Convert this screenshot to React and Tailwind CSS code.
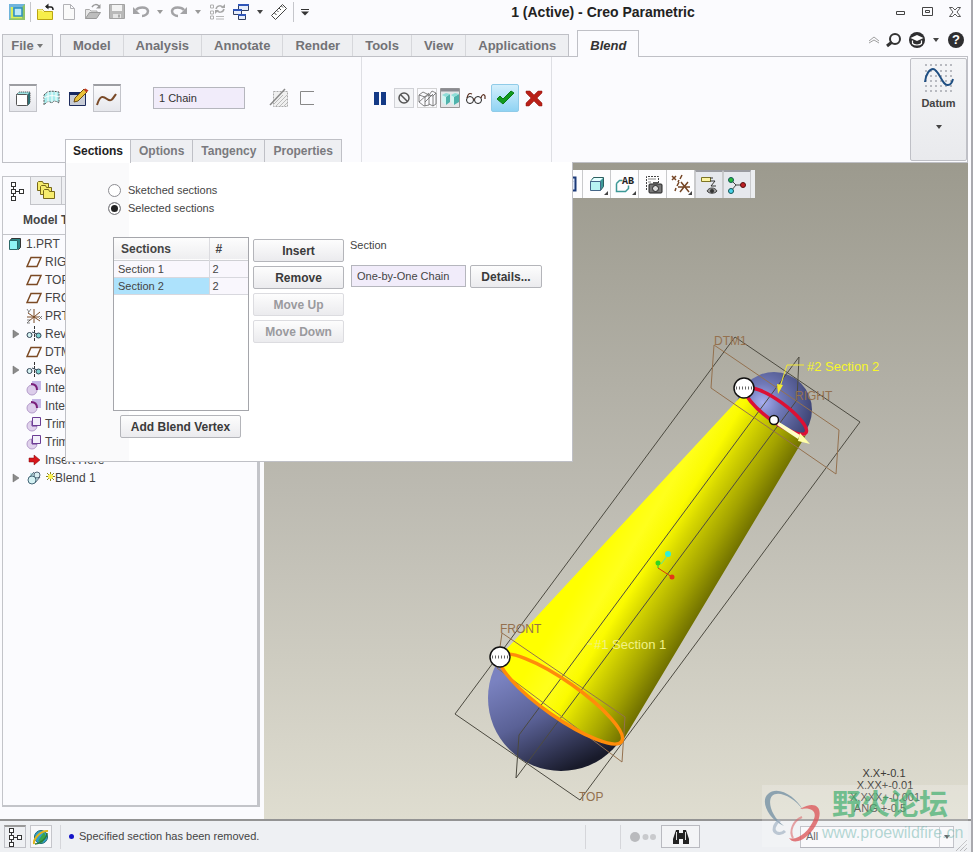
import React from "react";

const Svg = ({ w = 18, h = 18, children, className = "" }) => (
  <svg width={w} height={h} viewBox={`0 0 ${w} ${h}`} fill="none" className={`block shrink-0 ${className}`} aria-hidden="true">
    {children}
  </svg>
);

const Caret = ({ color = "#444" }) => (
  <Svg w={8} h={6}><path d="M1 1h6L4 5z" fill={color} /></Svg>
);

/* ---------- quick access toolbar ---------- */

const LogoIcon = () => (
  <Svg>
    <rect x="1" y="1" width="16" height="16" fill="#8fc46a" />
    <path d="M1 1h16L1 17z" fill="#6fb4dc" />
    <path d="M4 4v10h10" stroke="#d8ee5a" strokeWidth="2.5" />
    <rect x="6" y="5" width="8" height="8" fill="#bfe9f8" stroke="#2d8fc0" strokeWidth="1.5" />
  </Svg>
);
const FolderUpIcon = () => (
  <Svg>
    <path d="M1.500 6.500h5l1.500 2h8.500v8H1.500z" fill="#f7ee4a" stroke="#b9a413" />
    <path d="M2 7h4l1.500 2" stroke="#fffbc0" />
    <path d="M10 4h5c1.500 0 2 1 2 3" stroke="#222" strokeWidth="1.500" />
    <path d="M12.500 0.500v6L9 3.500z" fill="#222" />
  </Svg>
);
const NewIcon = () => (
  <Svg><path d="M3.500 1.500h7l4 4v11h-11zM10.500 1.500v4h4" fill="#fafafa" stroke="#b2b2b6" /></Svg>
);
const OpenIcon = () => (
  <Svg>
    <path d="M1.500 15.500v-9h4l1.500 1.500h6v2" stroke="#aaa" fill="#e8e8e8" />
    <path d="M1.500 15.500l4-6h11l-4 6z" fill="#bdbdbd" stroke="#999" />
    <path d="M8 4c2-3 5-3 7-1" stroke="#999" strokeWidth="1.500" />
    <path d="M16.500 1v4.500H12z" fill="#999" />
  </Svg>
);
const SaveIcon = () => (
  <Svg>
    <path d="M1.500 1.500h15v14h-15z" fill="#b9b9b9" stroke="#a2a2a2" />
    <path d="M4 2h10v6H4z" fill="#f3f3f3" />
    <path d="M5 11h8v4H5z" fill="#e4e4e4" /><path d="M10 11.500h2v3h-2z" fill="#aaa" />
  </Svg>
);
const UndoIcon = ({ flip }) => (
  <Svg className={flip ? "-scale-x-100" : ""}>
    <path d="M4 7c2-3 11-4 12 1 0 3-3 5-6 5" stroke="#a3a3a6" strokeWidth="2.500" />
    <path d="M1 4v7h7z" fill="#a3a3a6" />
  </Svg>
);
const RegenIcon = () => (
  <Svg>
    {[2, 8, 13].map((y) => <path key={y} d={`M2.500 ${y}h3v3h-3z`} stroke="#b0b0b0" />)}
    <path d="M8 13.500h8M8 16h8" stroke="#b8b8b8" />
    <path d="M8 6c1-4 6-4 7-1M16 6c-1 4-6 4-7 1" stroke="#a6a6a6" strokeWidth="1.500" />
    <path d="M13 5h4V1zM11 7H7v4z" fill="#a6a6a6" />
  </Svg>
);
const WindowsIcon = () => (
  <Svg>
    {[[6, 1, 10, 6], [1, 6, 8, 5], [6, 11, 7, 5]].map(([x, y, w, h]) => (
      <g key={y}>
        <path d={`M${x + 0.5} ${y + 0.5}h${w}v${h}h-${w}z`} fill="#e6edfb" stroke="#333f60" />
        <path d={`M${x} ${y + 1}h${w + 1}`} stroke="#2f55b8" strokeWidth="2" />
      </g>
    ))}
  </Svg>
);
const RulerIcon = () => (
  <Svg>
    <path d="M1.500 12.500L12.500 1.500l4 4L5.500 16.500z" fill="#fff" stroke="#444" />
    <path d="M4.500 10l2 2M7 7.500l1.500 1.500M9 5l2 2M11.500 3l1.500 1.500" stroke="#444" />
  </Svg>
);

/* ---------- ribbon ---------- */

const SolidIcon = () => (
  <Svg>
    <path d="M2 5l3-3h11v11l-3 3z" fill="#9fe3e3" stroke="#333" strokeDasharray="1 1" />
    <path d="M13 5l3-3v11l-3 3z" fill="#2f6f72" />
    <rect x="2.500" y="4.500" width="11" height="11" rx="1" fill="#fff" stroke="#555" />
  </Svg>
);
const SurfaceIcon = () => (
  <Svg>
    <path d="M2 6c4-5 8-4 15-3v11c-4-3-6-2-7 0-3-2-5-2-8 2z" fill="#a8ecec" stroke="#555" strokeDasharray="2 1" />
    <path d="M6 3v11M10 3v10M14 3v9M2 9c5-3 10-3 15-1" stroke="#fff" />
  </Svg>
);
const SketchIcon = () => (
  <Svg w={22} h={20}>
    <path d="M1.500 4.500h16v13h-16z" fill="#c8ccd6" stroke="#1d2b5c" />
    <path d="M1 5.500h17" stroke="#17285f" strokeWidth="3" />
    <path d="M6 14l1-4 9-9 3 3-9 9z" fill="#e9c13b" stroke="#6a4b10" />
    <path d="M15.500 1.500l3 3 2-2-3-2z" fill="#c23b22" />
  </Svg>
);
const SplineIcon = () => (
  <Svg w={22} h={18}><path d="M1 15C4 5 7 6 11 9s5 1 9-5" stroke="#7a4a28" strokeWidth="2" /></Svg>
);
const HatchIcon = () => (
  <Svg w={20} h={20}>
    <path d="M4.500 3.500h14v15h-14z" stroke="#aaa" strokeDasharray="2 1" fill="#f0f0f0" />
    <path d="M7 18L18 7M11 18l7-7M15 18l3-3M5 16l9-9" stroke="#bbb" />
    <path d="M1 17L16 1" stroke="#888" strokeWidth="1.500" />
  </Svg>
);
const OpenBoxIcon = () => (
  <Svg><path d="M16 2.500H2.500v13H16" stroke="#888" /></Svg>
);
const PauseIcon = () => (
  <Svg><path d="M3 3h5v13H3zM10 3h5v13h-5z" fill="#143a86" /></Svg>
);
const NoIcon = () => (
  <Svg><circle cx="9" cy="9" r="5" stroke="#555" strokeWidth="1.500" /><path d="M5.500 5.500l7 7" stroke="#555" strokeWidth="1.500" /></Svg>
);
const WireIcon = () => (
  <Svg w={20} h={20}>
    <path d="M.5 .5h19v19H.5z" stroke="#aaa" strokeDasharray="1 1" />
    <path d="M2 7l4-3 6 3v10l-5 1-5-4zM2 7l6 2 4-2M8 9v9M12 7l3-4 4 2-3 3v10l-4-2M16 8l-4-1M19 5v11l-3 2M2 14l10-9M8 14l8-8" stroke="#666" strokeWidth="0.800" />
  </Svg>
);
const ShadedIcon = () => (
  <Svg w={20} h={20}>
    <path d="M.5 .5h19v19H.5z" fill="#e4e6e8" stroke="#999" />
    <path d="M1 2h18" stroke="#8a8a90" strokeWidth="3" />
    <path d="M2 7l4 2v8l-4-3zM11 7l3 2v8l-3-3z" fill="#d2f6f2" />
    <path d="M6 9l4-3v8l-4 3zM14 9l5-3v8l-5 3z" fill="#4fb3ac" />
    <path d="M2 7l4-2 4 1-4 3zM11 7l4-2 4 1-5 3z" fill="#8fded8" />
  </Svg>
);
const GlassesIcon = () => (
  <Svg w={22} h={18}>
    <circle cx="5" cy="11" r="3.500" stroke="#222" /><circle cx="13" cy="11" r="3.500" stroke="#222" />
    <path d="M8 10h2M2 9C3 4 5 4 7 5M16 9c1-4 3-4 4-2v3" stroke="#5a3020" strokeWidth="1.200" />
  </Svg>
);
const CheckIcon = () => (
  <Svg w={20} h={20}><path d="M2 11l3-3 3 3 8-8 3 2L8 16z" fill="#119a1d" stroke="#0b7a14" /></Svg>
);
const CrossIcon = () => (
  <Svg w={20} h={20}><path d="M2 3h4l4 4 4-4h4v2l-5 5 5 5v3h-3l-5-5-5 5H2v-3l5-5-5-5z" fill="#b92018" stroke="#8c140e" strokeWidth="0.500" /></Svg>
);

const DatumIcon = () => (
  <Svg w={32} h={30}>
    {[1, 7, 12, 17, 22, 27].map((y) =>
      [2, 7, 12, 17, 22, 27].map((x) => <rect key={`${x}-${y}`} x={x} y={y} width="2" height="2" fill="#b8bac0" />)
    )}
    <path d="M2 19C3 10 7 6 10 6c6 0 9 17 15 16 3 0 4-2 5-6" stroke="#1f4f82" strokeWidth="2" />
  </Svg>
);

/* ---------- model tree ---------- */

const TreeNodesIcon = () => (
  <Svg w={16} h={20}>
    <path d="M4.500 4v12M5 10.500h7" stroke="#333" />
    {[[2, 1], [2, 8], [2, 15], [10, 8]].map(([x, y]) => (
      <rect key={`${x}${y}`} x={x + 0.5} y={y + 0.5} width="4" height="4" fill="#fff" stroke="#333" />
    ))}
  </Svg>
);
const FoldersIcon = () => (
  <Svg w={20} h={20}>
    {[[1, 1], [4, 5], [7, 9]].map(([x, y]) => (
      <path key={x} d={`M${x + 0.5} ${y + 0.5}l1-1h4l1 2h5v7h-11z`} fill="#f6ec6d" stroke="#77681a" />
    ))}
  </Svg>
);
const PartIcon = () => (
  <Svg w={14} h={14}>
    <path d="M1.500 4.500l2-3h9v9l-2 2z" fill="#2d8585" stroke="#333" />
    <path d="M1.500 3.500h8v9h-8z" fill="#8ff4f4" stroke="#2c6868" />
  </Svg>
);
const PlaneIcon = () => (
  <Svg w={16} h={14}><path d="M5 2.500h10l-4 9H1z" stroke="#7b4a24" strokeWidth="1.500" /></Svg>
);
const CsysIcon = () => (
  <Svg w={16} h={16}>
    <path d="M8 1v14M2 5l12 8M14 4L3 13M1 9h12" stroke="#7b4a24" />
    <path d="M1 1l2 3M5 1L2 5M13 8l3 3M16 8l-3 3M1 12h3l-3 3h3" stroke="#555" strokeWidth="0.700" />
  </Svg>
);
const RevolveIcon = () => (
  <Svg w={16} h={16}>
    <path d="M8.500 0v16" stroke="#333" strokeDasharray="3 1" />
    <circle cx="3.500" cy="9" r="2.500" fill="#d6f3f3" stroke="#345" />
    <path d="M6 6l5 2" stroke="#345" />
    <circle cx="12.500" cy="9.500" r="2.500" fill="#7fd0d0" stroke="#345" />
  </Svg>
);
const IntersectIcon = () => (
  <Svg w={16} h={16}>
    <rect x="6" y="1" width="9" height="9" fill="#c4b6e6" />
    <circle cx="6" cy="10" r="5" fill="#dccdea" stroke="#b49ccb" />
    <path d="M5 4c4 0 6 2 6 6" stroke="#7a1f7a" strokeWidth="2" />
  </Svg>
);
const TrimIcon = () => (
  <Svg w={16} h={16}>
    <circle cx="6" cy="10" r="5" fill="#e0d2ec" stroke="#b49ccb" />
    <path d="M6.500 5.500v-4h8v8h-8z" fill="#f3effa" stroke="#6c3d94" />
    <path d="M6 5v5h5" stroke="#6c3d94" />
  </Svg>
);
const InsertIcon = () => (
  <Svg w={16} h={14}><path d="M3 5h5V2l6 5-6 5V9H3z" fill="#d8161c" stroke="#7d0a0e" strokeWidth="0.500" /></Svg>
);
const BlendIcon = () => (
  <Svg w={16} h={16}>
    <path d="M4 3h9v5l-5 5-4-4z" fill="#bfe6ea" />
    <circle cx="11" cy="5" r="3" fill="#d8eef2" stroke="#567" />
    <path d="M8 2l-5 6M14 7l-5 6" stroke="#567" />
    <circle cx="6" cy="10" r="4" fill="#d4f1f3" stroke="#467" />
  </Svg>
);

const TREE = [
  ["RIGHT", PlaneIcon],
  ["TOP", PlaneIcon],
  ["FRONT", PlaneIcon],
  ["PRT_CSYS_DEF", CsysIcon],
  ["Revolve 1", RevolveIcon, true],
  ["DTM1", PlaneIcon],
  ["Revolve 2", RevolveIcon, true],
  ["Intersect 1", IntersectIcon],
  ["Intersect 2", IntersectIcon],
  ["Trim 1", TrimIcon],
  ["Trim 2", TrimIcon],
  ["Insert Here", InsertIcon],
  ["Blend 1", BlendIcon, true, true],
];

function ModelTree() {
  return (
    <aside className="flex w-[264px] shrink-0 flex-col pt-[13px] pr-1 pb-3 pl-0.5">
      <div className="flex flex-1 flex-col border-t border-r-3 border-b-2 border-l border-[#c3c4c9]">
        <div className="flex h-7">
          <button aria-label="Model tree" className="flex w-7 items-center justify-center border-r border-[#c3c4c9]"><TreeNodesIcon /></button>
          <button aria-label="Folder browser" className="flex w-[31px] items-center justify-center border-r border-b border-[#c3c4c9] bg-[#eeeff2]"><FoldersIcon /></button>
          <div className="flex-1 border-b border-[#c3c4c9] bg-[#eeeff2]" />
        </div>
        <h2 className="h-[30px] border-b border-[#c3c4c9] pl-5 text-xs leading-[30px] font-bold text-[#444]">Model Tree</h2>
        <ul className="text-xs text-[#444]">
          <li className="flex h-[18px] items-center gap-1 pl-[5px]"><PartIcon />1.PRT</li>
          {TREE.map(([name, Icon, expands, isNew]) => (
            <li key={name} className="flex h-[18px] items-center pl-[9px]">
              <span className="w-[14px]">
                {expands && <Svg w={8} h={10}><path d="M1 1v8l6-4z" fill="#8b8b8b" stroke="#666" strokeWidth="0.500" /></Svg>}
              </span>
              <Icon />
              <span className={isNew ? "flex items-center pl-1" : "pl-[3px]"}>
                {isNew && (
                  <Svg w={9} h={12}><path d="M4.500 0v9M0 4.500h9M1 1l7 7M8 1L1 8" stroke="#8a8420" strokeWidth="1" /><circle cx="4.500" cy="4.500" r="2.500" fill="#fbf04a" /></Svg>
                )}
                {name}
              </span>
            </li>
          ))}
        </ul>
      </div>
    </aside>
  );
}

/* ---------- graphics area ---------- */

function Scene() {
  return (
    <svg viewBox="264 163 704 656" className="absolute inset-0 h-full w-full font-['Liberation_Sans',Arial,sans-serif]" fill="none" fontSize="12">
      <defs>
        <linearGradient id="cone" gradientUnits="userSpaceOnUse" x1="612" y1="530" x2="724" y2="598">
          <stop offset="0" stopColor="#ffff00" />
          <stop offset="0.200" stopColor="#ffff1c" />
          <stop offset="0.360" stopColor="#fbfb00" />
          <stop offset="0.500" stopColor="#d6d600" />
          <stop offset="0.720" stopColor="#a2a200" />
          <stop offset="1" stopColor="#545400" />
        </linearGradient>
        <linearGradient id="ball" gradientUnits="userSpaceOnUse" x1="518" y1="670" x2="566" y2="772">
          <stop offset="0" stopColor="#7a82c0" />
          <stop offset="0.450" stopColor="#5a6196" />
          <stop offset="1" stopColor="#181a2a" />
        </linearGradient>
        <radialGradient id="cap" cx="0.350" cy="0.400" r="0.700">
          <stop offset="0" stopColor="#a7aef0" />
          <stop offset="0.350" stopColor="#7079b8" />
          <stop offset="1" stopColor="#3b4170" />
        </radialGradient>
      </defs>

      <circle cx="561" cy="698" r="73" fill="url(#ball)" />
      <circle cx="774" cy="410" r="38" fill="url(#cap)" />
      <path d="M500 656L746 391A37 10 36 0 0 806 435L622 742A74 18 35 0 1 500 656z" fill="url(#cone)" />

      <g stroke="#4c4a40" strokeWidth="1">
        <path d="M455 714L735 337 860 422 580 800z" />
        <path d="M519 735L799 357 797 400 516 778z" />
      </g>
      <g stroke="#94714f" strokeWidth="1">
        <path d="M502 633L625 717 622 762 497 668z" />
        <path d="M714 345L839 430 836 474 711 388z" />
      </g>

      <ellipse cx="561" cy="699" rx="74" ry="18" transform="rotate(35 561 699)" stroke="#ff8c0a" strokeWidth="3.500" />
      <ellipse cx="776" cy="411" rx="37" ry="10" transform="rotate(36 776 411)" stroke="#dc1034" strokeWidth="3.500" />

      <path d="M779 422l21 13-2 4-21-14z" fill="#ffffc8" />
      <path d="M800 433l10 11-12-3z" fill="#ffffa8" />
      <path d="M804 365h-17l-7 22" stroke="#f3ea30" />
      <path d="M777 384l6 1-5 9z" fill="#f3ea30" />

      {[[500, 657], [744, 388]].map(([x, y]) => (
        <g key={x}>
          <circle cx={x} cy={y} r="10" fill="#fff" stroke="#111" strokeWidth="1.500" />
          <path d={`M${x - 8} ${y}h17`} stroke="#666" strokeWidth="3" strokeDasharray="1 2" />
        </g>
      ))}
      <circle cx="774" cy="420" r="4.500" fill="#fff" stroke="#111" strokeWidth="1.500" />

      <path d="M658 568l14 9" stroke="#d83a10" />
      <path d="M658 568v-5" stroke="#22c832" />
      <path d="M661 564l7-9" stroke="#58e6a0" />
      <circle cx="668" cy="554" r="3" fill="#2ff0dc" />
      <circle cx="658" cy="563" r="2.500" fill="#33d422" />
      <circle cx="672" cy="577" r="2.500" fill="#e23818" />

      <g fill="#94714f">
        <text x="714" y="345">DTM1</text>
        <text x="795" y="400">RIGHT</text>
        <text x="500" y="633">FRONT</text>
        <text x="579" y="801">TOP</text>
      </g>
      <g fontSize="13">
        <text x="807" y="371" fill="#f6f62a">#2 Section 2</text>
        <text x="594" y="649" fill="#f1f186">#1 Section 1</text>
      </g>
      <path d="M587 644h5" stroke="#f1f186" />
      <g fill="#3c3b37" fontSize="11" textAnchor="middle">
        <text x="884" y="777">X.X+-0.1</text>
        <text x="885" y="789">X.XX+-0.01</text>
        <text x="885" y="801">X.XXX+-0.001</text>
        <text x="880" y="812">ANG.+-0.5</text>
      </g>
    </svg>
  );
}

const DropCorner = () => <path d="M22 18v4h-4z" fill="#444" />;

const VIEW_TOOLS = [
  ["Refit", <Svg w={22} h={22}><circle cx="9" cy="9" r="5" stroke="#345" /><path d="M13 13l5 5" stroke="#345" strokeWidth="2" /></Svg>],
  ["Repaint", <Svg w={22} h={22}><path d="M5.500 4.500h12v13h-12z" fill="#dfe9fa" stroke="#1c3a78" strokeWidth="2" /><path d="M8 11l3 3 4-6" stroke="#1c3a78" /></Svg>],
  ["Display style", <Svg w={22} h={22}><path d="M4.500 8.500l3-4h10v9l-3 4z" fill="#3e9a9a" stroke="#2d5f60" /><path d="M4.500 8.500h10v9h-10z" fill="#b7f4f2" stroke="#468" /><path d="M5 8l3-3h9l-3 3z" fill="#e5ffff" /><DropCorner /></Svg>],
  ["Saved orientations", <Svg w={22} h={22}><path d="M2.500 10.500l3-3h3M2.500 10.500v8h9l3-3v-3" fill="none" stroke="#3c9896" strokeWidth="1.500" /><text x="8" y="11" fontSize="10" fontWeight="bold" fill="#222" fontFamily="Liberation Mono">AB</text><DropCorner /></Svg>],
  ["View manager", <Svg w={22} h={22}><path d="M4.500 17v-13.500h12V10" stroke="#444" strokeDasharray="2 1" fill="#fff" /><path d="M6 6h8M6 9h3" stroke="#888" /><rect x="7" y="11" width="13" height="9" rx="1" fill="#777" stroke="#222" /><rect x="11" y="9" width="5" height="3" fill="#555" /><circle cx="13.500" cy="15.500" r="3" fill="#ddd" stroke="#222" /></Svg>],
  ["Datum display", <Svg w={22} h={22}><path d="M2 3l4 4M6 3L2 7M12 2l-2 4M9 7l-1 2M5 18l1-3M7 13l2-4M11 9l8 10M18 9l-8 10M8 14h12" stroke="#744423" strokeWidth="1.500" /><DropCorner /></Svg>],
  ["Annotation display", <Svg w={22} h={22}><path d="M3.500 3.500h9v4h-9z" fill="#fbf3a0" stroke="#7d7424" /><path d="M12 4h3M12 7h5l-4 5h5" stroke="#333" /><path d="M9 17c2-4 8-4 10 0-2 3-8 3-10 0z" fill="#999" stroke="#444" /><circle cx="14" cy="17" r="2" fill="#333" /></Svg>, true],
  ["Spin center", <Svg w={22} h={22}><path d="M5 6l5 5-5 6M10 11h7" stroke="#444" /><circle cx="5" cy="6" r="2.500" fill="#2abb3a" stroke="#155" /><circle cx="5" cy="17" r="2.500" fill="#4ad2ea" stroke="#155" /><circle cx="17" cy="11" r="2.500" fill="#c01f24" stroke="#511" /></Svg>, true],
];

function Viewport() {
  return (
    <main className="relative flex-1 overflow-hidden bg-linear-to-b from-[#9c9a8e] via-[#bcbab1] to-[#dfddd0]">
      <Scene />
      <div className="absolute top-[7px] left-[263px] flex h-7 bg-[#eceef0] pr-1">
        {VIEW_TOOLS.map(([label, icon, on]) => (
          <button
            key={label}
            aria-label={label}
            className={`flex w-7 items-center justify-center border-r border-[#c9cacc] ${on ? "border-t-2 border-l border-t-[#9a9ba0] bg-[#e6e8ed]" : "bg-[#fdfdfe]"}`}
          >
            {icon}
          </button>
        ))}
      </div>
    </main>
  );
}

/* ---------- blend dashboard panel ---------- */

const buttonBase = "h-[23px] rounded-xs border px-2 text-xs font-bold bg-linear-to-b from-[#fdfdfd] to-[#ebebee]";

function PushButton({ children, disabled, className = "" }) {
  return (
    <button disabled={disabled} className={`${buttonBase} ${disabled ? "border-[#dcdce0] text-[#9a9a9e]" : "border-[#b4b5ba] text-[#3a3a3a]"} ${className}`}>
      {children}
    </button>
  );
}

function SectionsPanel() {
  const radio = "h-[13px] w-[13px] appearance-none rounded-full border border-[#8d8d92] bg-white checked:bg-[#222] checked:shadow-[inset_0_0_0_2px_white]";
  return (
    <section className="absolute top-full left-[62px] z-10 flex h-[300px] w-[508px] flex-col border border-t-0 border-[#bfc0c6] bg-[linear-gradient(90deg,#fafafb_63px,#fff_63px)] pt-[19px] pl-[47px] text-[11px] text-[#444]">
      <div className="-ml-[5px] flex flex-col">
        <label className="flex h-[18px] items-center gap-[7px]"><input type="radio" name="mode" className={radio} />Sketched sections</label>
        <label className="flex h-[18px] items-center gap-[7px]"><input type="radio" name="mode" defaultChecked className={radio} />Selected sections</label>
      </div>
      <div className="mt-5 flex items-start">
        <div className="h-[174px] w-[136px] border border-[#a5a6ab] bg-white">
          <table className="w-full border-collapse text-left">
            <thead>
              <tr className="h-[22px] border-b border-[#cfd0d4] bg-linear-to-b from-[#fdfdfd] to-[#eeeef0] text-xs">
                <th className="w-[95px] border-r border-[#dcdce0] py-0 pl-[7px]">Sections</th>
                <th className="py-0 pl-[6px]">#</th>
              </tr>
            </thead>
            <tbody>
              <tr className="h-[17px] border-b border-[#d8d8de] bg-[#f9f7fd] leading-4">
                <td className="border-r border-[#d8d8de] p-0 pl-1">Section 1</td><td className="p-0 pl-[3px]">2</td>
              </tr>
              <tr className="h-[17px] border-b border-[#d8d8de] bg-[#f9f7fd] leading-4">
                <td className="border-r border-[#d8d8de] bg-[#ade2fc] p-0 pl-1">Section 2</td><td className="p-0 pl-[3px]">2</td>
              </tr>
            </tbody>
          </table>
        </div>
        <div className="mt-0.5 ml-1 flex w-[91px] flex-col gap-1">
          <PushButton>Insert</PushButton>
          <PushButton>Remove</PushButton>
          <PushButton disabled className="whitespace-nowrap">Move Up</PushButton>
          <PushButton disabled className="whitespace-nowrap">Move Down</PushButton>
        </div>
        <div className="ml-1.5 flex flex-col gap-3">
          <label htmlFor="chain" className="h-4 leading-4">Section</label>
          <div className="flex gap-1 pl-px">
            <input id="chain" readOnly value="One-by-One Chain" className="h-[22px] w-[115px] border border-[#b5b6bd] bg-[#f1ecfa] px-[5px] text-[11px]" />
            <PushButton className="w-[72px]">Details...</PushButton>
          </div>
        </div>
      </div>
      <PushButton className="mt-1 ml-[7px] w-[121px] whitespace-nowrap">Add Blend Vertex</PushButton>
    </section>
  );
}

const Pressed = ({ label, children }) => (
  <button aria-label={label} className="flex h-7 w-7 items-center justify-center border border-t-2 border-[#c3c4ca] border-t-[#9c9da2] bg-linear-to-b from-[#fbfbfd] to-[#e6e7ec]">{children}</button>
);
const Flat = ({ label, children, className = "w-7" }) => (
  <button aria-label={label} className={`flex h-7 items-center justify-center ${className}`}>{children}</button>
);

function Ribbon() {
  return (
    <div className="relative mr-[3px] ml-0.5 flex h-[106px] border border-t-0 border-[#bfc0c6]">
      <div className="w-[359px] border-r border-[#dedfe4] pt-[27px]">
        <div className="flex items-center pl-1.5">
          <Pressed label="Solid"><SolidIcon /></Pressed>
          <Flat label="Surface"><SurfaceIcon /></Flat>
          <Flat label="Sketch"><SketchIcon /></Flat>
          <Pressed label="Curve"><SplineIcon /></Pressed>
          <input aria-label="Section chain" readOnly value="1 Chain" className="ml-8 h-[22px] w-[92px] border border-[#b5b6bd] bg-[#f1ecfa] px-[5px] text-[11px] text-[#333]" />
          <Flat label="Remove material" className="ml-5 w-7"><HatchIcon /></Flat>
          <Flat label="Thicken"><OpenBoxIcon /></Flat>
        </div>
      </div>
      <div className="flex w-[190px] items-start border-r border-[#dedfe4] pt-[27px] pl-[5px]">
        <Flat label="Pause" className="w-[25px]"><PauseIcon /></Flat>
        <Flat label="No preview" className="w-[23px]"><span className="border border-[#d0d1d6] bg-[#f3f4f6]"><NoIcon /></span></Flat>
        <Flat label="Unattached preview" className="w-[23px]"><WireIcon /></Flat>
        <Flat label="Attached preview" className="w-[23px]"><ShadedIcon /></Flat>
        <Flat label="Verify" className="w-[30px]"><GlassesIcon /></Flat>
        <button aria-label="Accept" className="flex h-7 w-7 items-center justify-center rounded-xs border border-[#90cbe8] bg-linear-to-b from-[#d3effc] to-[#8fd3f3]"><CheckIcon /></button>
        <Flat label="Cancel" className="w-[30px]"><CrossIcon /></Flat>
      </div>
      <div className="flex-1" />
      <button className="my-px flex w-[57px] flex-col items-center rounded-xs border border-[#bfc0c6] bg-linear-to-b from-[#f4f5f7] to-[#e9eaed] pt-1 text-[11px] font-bold text-[#444]">
        <DatumIcon />
        <span className="mt-0.5 mb-3">Datum</span>
        <Caret />
      </button>
      <nav className="absolute bottom-0 left-[62px] z-20 flex h-[23px] text-xs font-bold text-[#7a7a7e]">
        <a href="#sections" className="-mb-px border-x border-t border-[#bfc0c6] bg-white px-[7px] pt-[3px] text-[#222]">Sections</a>
        {["Options", "Tangency", "Properties"].map((t) => (
          <a key={t} href={`#${t}`} className="border-t border-r border-[#bfc0c6] bg-[#eeeff2] px-2 pt-[3px]">{t}</a>
        ))}
      </nav>
      <SectionsPanel />
    </div>
  );
}

/* ---------- frame ---------- */

const Tool = ({ label, children, className = "w-5" }) => (
  <button aria-label={label} className={`flex items-center justify-center ${className}`}>{children}</button>
);
const Rule = () => <span className="h-5 w-px bg-[#c5c6cb]" />;

function TitleBar() {
  return (
    <header className="flex h-[23px] items-center pr-2">
      <div className="flex items-center gap-1 pl-2">
        <Tool label="Application menu" className="w-[18px]"><LogoIcon /></Tool>
        <Rule />
        <Tool label="Working directory"><FolderUpIcon /></Tool>
        <Tool label="New"><NewIcon /></Tool>
        <Tool label="Open"><OpenIcon /></Tool>
        <Tool label="Save"><SaveIcon /></Tool>
        <Tool label="Undo"><UndoIcon /></Tool>
        <Tool label="Undo list" className="w-2.5"><Caret color="#999" /></Tool>
        <Tool label="Redo"><UndoIcon flip /></Tool>
        <Tool label="Redo list" className="w-2.5"><Caret color="#999" /></Tool>
        <Tool label="Regenerate"><RegenIcon /></Tool>
        <Tool label="Windows"><WindowsIcon /></Tool>
        <Tool label="Window list" className="w-2.5"><Caret /></Tool>
        <Tool label="Measure"><RulerIcon /></Tool>
        <Rule />
        <Tool label="Customize toolbar" className="w-3.5"><Svg w={10} h={8}><path d="M1 1.500h8" stroke="#333" /><path d="M1 3.500h8L5 7.500z" fill="#333" /></Svg></Tool>
      </div>
      <h1 className="flex-1 pl-0.5 text-center text-sm leading-5 font-bold text-[#222]">1 (Active) - Creo Parametric</h1>
      <div className="flex items-center gap-2.5 text-[#444]">
        <Tool label="Minimize" className="w-[17px]"><Svg w={10} h={12}><path d="M.5 5.500h8v3h-8z" stroke="#444" /></Svg></Tool>
        <Tool label="Maximize" className="w-[17px]"><Svg w={12} h={10}><path d="M.5 .5h10v8h-10zM3.500 3.500h4v2h-4z" stroke="#444" /></Svg></Tool>
        <Tool label="Close" className="w-[17px]"><Svg w={12} h={10}><path d="M.5 .5h3L6 3l2.500-2.500h3L8 5l3.500 4.500h-3L6 7 3.500 9.500h-3L4 5z" stroke="#444" strokeWidth="0.900" /></Svg></Tool>
      </div>
    </header>
  );
}

const TABS = ["Model", "Analysis", "Annotate", "Render", "Tools", "View", "Applications"];

function TabRow() {
  return (
    <div className="mr-[3px] ml-0.5 flex h-[34px] items-end border-b border-[#bfc0c6] text-[13px] font-bold text-[#727276]">
      <button className="flex h-[22px] w-[51px] items-center justify-center gap-0.5 border border-b-0 border-[#bfc0c6] bg-[#eeeff2]">File<Caret color="#777" /></button>
      <nav className="ml-[7px] flex h-[22px] border-t border-l border-[#bfc0c6] bg-[#eeeff2]">
        {TABS.map((t) => (
          <a key={t} href={`#${t}`} className="border-r border-[#d6d7db] px-3 leading-[22px] last:border-[#bfc0c6]">{t}</a>
        ))}
      </nav>
      <a href="#Blend" className="-mb-px ml-2 h-[27px] border border-b-0 border-[#bfc0c6] bg-[#fbfbfe] px-3 leading-[29px] text-[#333] italic">Blend</a>
      <div className="ml-auto flex h-full items-center gap-1.5 pr-[3px]">
        <Tool label="Collapse ribbon" className="w-3"><Svg w={12} h={8}><path d="M1 5l5-4 5 4M1 7l5-3 5 3" stroke="#888" strokeWidth="0.800" /></Svg></Tool>
        <Tool label="Search" className="w-4"><Svg w={16} h={16}><circle cx="9" cy="7" r="5" stroke="#333" strokeWidth="2" /><path d="M6 10l-5 4" stroke="#333" strokeWidth="3" /></Svg></Tool>
        <Tool label="Learning" className="w-[18px]"><Svg><circle cx="9" cy="9" r="8" fill="#2e2e30" /><path d="M2.500 7L9 4l6.500 3L9 10z" fill="#fff" /><path d="M4.500 9.500v3c2 2 7 2 9 0v-3" stroke="#fff" strokeWidth="1.200" /></Svg></Tool>
        <Tool label="Learning menu" className="w-2"><Caret /></Tool>
        <Tool label="Help" className="ml-px w-[18px]"><span className="h-4 w-4 rounded-full bg-[#2e2e30] text-center text-[13px] leading-4 text-white">?</span></Tool>
      </div>
    </div>
  );
}

function StatusBar() {
  return (
    <footer className="flex h-[33px] items-center border-t-2 border-[#939393] bg-[#eef0f3] pr-[3px] pl-1 text-[11px] text-[#444]">
      <button aria-label="Toggle tree" className="flex h-[23px] w-[22px] items-center justify-center border border-t-2 border-[#bfc0c6] border-t-[#999]"><TreeNodesIcon /></button>
      <button aria-label="Toggle browser" className="ml-1 flex h-[23px] w-[22px] items-center justify-center border border-[#c5c6cb] bg-[#f8f8fa]">
        <Svg><circle cx="9" cy="9" r="6.500" fill="#2f9fd0" stroke="#1d6a70" /><path d="M6 13L12 4l2 5-4 6z" fill="#38a44a" /><path d="M2 16C1 11 9 2 16 3" stroke="#e0b51c" strokeWidth="2" /><path d="M3 16c4 0 12-5 12-11" stroke="#2b7a35" strokeWidth="1.500" /></Svg>
      </button>
      <span className="mx-2 h-6 w-px bg-[#d5d6da]" />
      <span className="h-[5px] w-[5px] rounded-full bg-[#1414c8]" />
      <p className="ml-[5px] flex-1">Specified section has been removed.</p>
      <span className="h-6 w-px bg-[#d5d6da]" />
      <span className="mr-2 ml-[34px] h-6 w-px bg-[#d5d6da]" />
      <Svg w={28} h={12}><circle cx="6" cy="6" r="5" fill="#b9babd" /><circle cx="16.500" cy="6" r="3" fill="#c9cacd" /><circle cx="24" cy="6" r="3" fill="#c9cacd" /></Svg>
      <button aria-label="Find" className="ml-1 flex h-[23px] w-[39px] items-center justify-center border border-[#b9bac0] bg-[#f3f4f6]">
        <Svg><path d="M4 2h3v3h4V2h3l3 9v5h-6v-5H7v5H1v-5z" fill="#222" /><path d="M4.500 4v8M13.500 4v8" stroke="#ddd" /></Svg>
      </button>
      <div className="relative ml-[100px] h-[22px] w-[154px]">
        <select aria-label="Selection filter" className="h-full w-full appearance-none border border-[#b5b6bd] bg-[#f8f8fb] px-[5px]"><option>All</option></select>
        <span className="pointer-events-none absolute top-0 right-0 flex h-full w-[15px] items-center justify-center border-l border-[#c5c6cb]"><Caret color="#444" /></span>
      </div>
      <Svg w={14} h={16} className="self-end"><path d="M2 15L13 4M6 15l7-7M10 15l3-3" stroke="#b9babd" /></Svg>
    </footer>
  );
}

function Watermark() {
  return (
    <div className="pointer-events-none absolute right-[3px] bottom-[5px] z-30 flex h-[62px] w-[206px] bg-white/20">
      <Svg w={62} h={62} className="-mr-1">
        <path d="M22 41C6 34-2 16 6 9 16 0 34 12 41 25 32 12 16 5 10 11 5 17 10 32 22 41z" fill="#7d96a8" opacity="0.850" />
        <path d="M18 35c-6 4-8 11-3 13 3 1 6 0 8-2" stroke="#a4b3c4" strokeWidth="3" opacity="0.700" />
        <path d="M38 24c14-8 22-3 19 9-5 17-24 30-30 20 8 3 20-6 25-19 3-8-3-12-14-10z" fill="#dc5a5e" opacity="0.800" />
        <path d="M31 53c-4-7 0-17 9-21" stroke="#dc6a6e" strokeWidth="2" opacity="0.600" />
      </Svg>
      <div className="flex flex-col pt-1 pl-3 font-['Liberation_Sans','Noto_Sans_CJK_SC',sans-serif]">
        <span className="text-[29px] leading-8 font-bold whitespace-nowrap text-[#3fae6d]/70">野火论坛</span>
        <span className="-ml-2.5 text-base leading-6 whitespace-nowrap text-[#76b7b0]/55">www.proewildfire.cn</span>
      </div>
    </div>
  );
}

export default function App() {
  return (
    <div className="relative flex min-h-screen flex-col overflow-hidden border-r-2 border-[#a9a9ae] bg-[#fbfbfe] font-['Liberation_Sans',Arial,sans-serif]">
      <TitleBar />
      <TabRow />
      <Ribbon />
      <div className="flex flex-1 pr-[3px]">
        <ModelTree />
        <Viewport />
      </div>
      <StatusBar />
      <Watermark />
    </div>
  );
}
